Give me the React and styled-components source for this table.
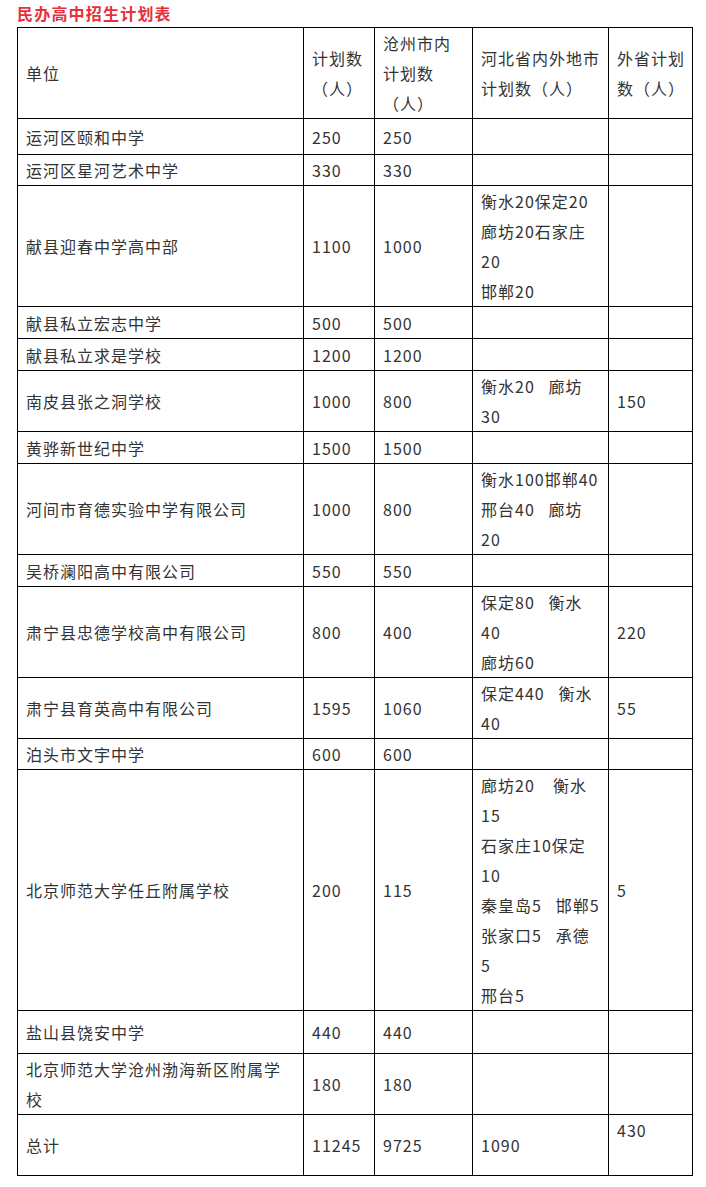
import React from "react";
import styled, { createGlobalStyle } from "styled-components";

const GlobalStyle = createGlobalStyle`
  body {
    margin: 0;
    background: #fff;
    font-family: "Noto Sans CJK SC", "Noto Sans", sans-serif;
  }
`;

const Page = styled.div`
  padding: 0 13px 0 17px;
  color: #333;
`;

const Title = styled.h3`
  margin: 0 0 1px;
  font-size: 16px;
  line-height: 26px;
  font-weight: bold;
  letter-spacing: 1.2px;
  color: #e8303c;
`;

const Table = styled.table`
  width: 676px;
  border-collapse: collapse;
  table-layout: fixed;
  font-size: 16px;
  letter-spacing: 1px;
`;

const Row = styled.tr`
  height: ${(p) => p.$h}px;
`;

const Cell = styled.td`
  border: 1px solid #000;
  padding: 0 7px 0 8px;
  line-height: 30px;
  vertical-align: ${(p) => (p.$top ? "top" : "middle")};
  white-space: nowrap;
  overflow: hidden;
`;

const Line = styled.div`
  white-space: pre;
`;

const columns = [286, 71, 98, 136, 84];

// gap between two places in one line
const sp = (n) => "\u00a0".repeat(n);

const header = [
  ["单位"],
  ["计划数", "（人）"],
  ["沧州市内", "计划数", "（人）"],
  ["河北省内外地市", "计划数（人）"],
  ["外省计划", "数（人）"],
];

const rows = [
  { name: ["运河区颐和中学"], total: "250", city: "250", prov: [], out: "", h: 36 },
  { name: ["运河区星河艺术中学"], total: "330", city: "330", prov: [], out: "", h: 31 },
  {
    name: ["献县迎春中学高中部"],
    total: "1100",
    city: "1000",
    prov: ["衡水20保定20", "廊坊20石家庄", "20", "邯郸20"],
    out: "",
    h: 121,
  },
  { name: ["献县私立宏志中学"], total: "500", city: "500", prov: [], out: "", h: 32 },
  { name: ["献县私立求是学校"], total: "1200", city: "1200", prov: [], out: "", h: 32 },
  {
    name: ["南皮县张之洞学校"],
    total: "1000",
    city: "800",
    prov: ["衡水20" + sp(3) + "廊坊", "30"],
    out: "150",
    h: 61,
  },
  { name: ["黄骅新世纪中学"], total: "1500", city: "1500", prov: [], out: "", h: 32 },
  {
    name: ["河间市育德实验中学有限公司"],
    total: "1000",
    city: "800",
    prov: ["衡水100邯郸40", "邢台40" + sp(3) + "廊坊", "20"],
    out: "",
    h: 91,
  },
  { name: ["吴桥澜阳高中有限公司"], total: "550", city: "550", prov: [], out: "", h: 32 },
  {
    name: ["肃宁县忠德学校高中有限公司"],
    total: "800",
    city: "400",
    prov: ["保定80" + sp(3) + "衡水", "40", "廊坊60"],
    out: "220",
    h: 91,
  },
  {
    name: ["肃宁县育英高中有限公司"],
    total: "1595",
    city: "1060",
    prov: ["保定440" + sp(3) + "衡水", "40"],
    out: "55",
    h: 61,
  },
  { name: ["泊头市文宇中学"], total: "600", city: "600", prov: [], out: "", h: 31 },
  {
    name: ["北京师范大学任丘附属学校"],
    total: "200",
    city: "115",
    prov: [
      "廊坊20" + sp(4) + "衡水",
      "15",
      "石家庄10保定",
      "10",
      "秦皇岛5" + sp(3) + "邯郸5",
      "张家口5" + sp(3) + "承德",
      "5",
      "邢台5",
    ],
    out: "5",
    h: 241,
  },
  { name: ["盐山县饶安中学"], total: "440", city: "440", prov: [], out: "", h: 43 },
  {
    name: ["北京师范大学沧州渤海新区附属学", "校"],
    total: "180",
    city: "180",
    prov: [],
    out: "",
    h: 61,
  },
  { name: ["总计"], total: "11245", city: "9725", prov: ["1090"], out: "430", outTop: true, h: 61 },
];

const Lines = ({ items }) => items.map((t, i) => <Line key={i}>{t}</Line>);

function App() {
  return (
    <Page>
      <GlobalStyle />
      <Title>民办高中招生计划表</Title>
      <Table>
        <colgroup>
          {columns.map((w, i) => (
            <col key={i} style={{ width: w }} />
          ))}
        </colgroup>
        <tbody>
          <Row $h={91}>
            {header.map((h, i) => (
              <Cell key={i}>
                <Lines items={h} />
              </Cell>
            ))}
          </Row>
          {rows.map((r, i) => (
            <Row key={i} $h={r.h}>
              <Cell>
                <Lines items={r.name} />
              </Cell>
              <Cell>{r.total}</Cell>
              <Cell>{r.city}</Cell>
              <Cell>
                <Lines items={r.prov} />
              </Cell>
              <Cell $top={r.outTop}>{r.out}</Cell>
            </Row>
          ))}
        </tbody>
      </Table>
    </Page>
  );
}

export default App;
